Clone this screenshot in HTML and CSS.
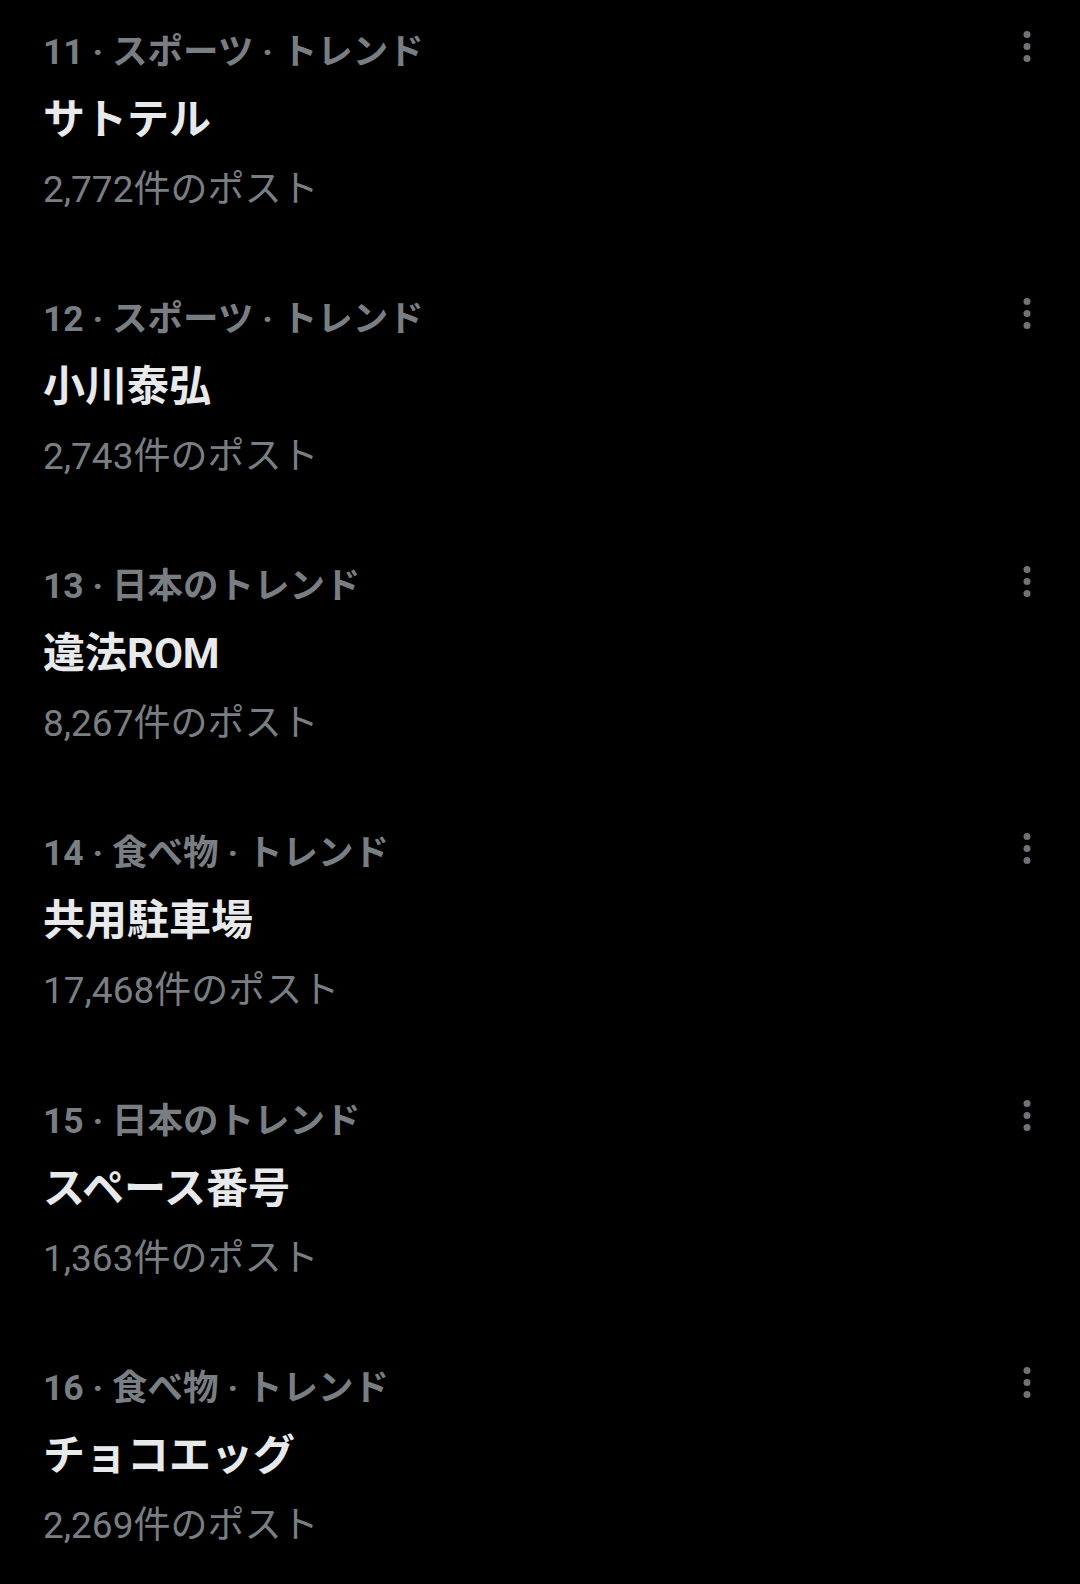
FILE: index.html
```html
<!DOCTYPE html>
<html lang="ja">
<head>
<meta charset="utf-8">
<title>トレンド</title>
<link rel="stylesheet" href="styles.css">
</head>
<body>
<main class="trends">
  <div class="trend">
    <div class="trend-body">
      <div class="meta">11 · スポーツ · トレンド</div>
      <div class="name">サトテル</div>
      <div class="count">2,772件のポスト</div>
    </div>
    <button class="more" aria-label="その他"><svg width="24" height="32" viewBox="0 0 24 32"><circle cx="12" cy="3.5" r="3.5"/><circle cx="12" cy="15.5" r="3.5"/><circle cx="12" cy="27.5" r="3.5"/></svg></button>
  </div>
  <div class="trend">
    <div class="trend-body">
      <div class="meta">12 · スポーツ · トレンド</div>
      <div class="name">小川泰弘</div>
      <div class="count">2,743件のポスト</div>
    </div>
    <button class="more" aria-label="その他"><svg width="24" height="32" viewBox="0 0 24 32"><circle cx="12" cy="3.5" r="3.5"/><circle cx="12" cy="15.5" r="3.5"/><circle cx="12" cy="27.5" r="3.5"/></svg></button>
  </div>
  <div class="trend">
    <div class="trend-body">
      <div class="meta">13 · 日本のトレンド</div>
      <div class="name">違法ROM</div>
      <div class="count">8,267件のポスト</div>
    </div>
    <button class="more" aria-label="その他"><svg width="24" height="32" viewBox="0 0 24 32"><circle cx="12" cy="3.5" r="3.5"/><circle cx="12" cy="15.5" r="3.5"/><circle cx="12" cy="27.5" r="3.5"/></svg></button>
  </div>
  <div class="trend">
    <div class="trend-body">
      <div class="meta">14 · 食べ物 · トレンド</div>
      <div class="name">共用駐車場</div>
      <div class="count">17,468件のポスト</div>
    </div>
    <button class="more" aria-label="その他"><svg width="24" height="32" viewBox="0 0 24 32"><circle cx="12" cy="3.5" r="3.5"/><circle cx="12" cy="15.5" r="3.5"/><circle cx="12" cy="27.5" r="3.5"/></svg></button>
  </div>
  <div class="trend">
    <div class="trend-body">
      <div class="meta">15 · 日本のトレンド</div>
      <div class="name">スペース番号</div>
      <div class="count">1,363件のポスト</div>
    </div>
    <button class="more" aria-label="その他"><svg width="24" height="32" viewBox="0 0 24 32"><circle cx="12" cy="3.5" r="3.5"/><circle cx="12" cy="15.5" r="3.5"/><circle cx="12" cy="27.5" r="3.5"/></svg></button>
  </div>
  <div class="trend">
    <div class="trend-body">
      <div class="meta">16 · 食べ物 · トレンド</div>
      <div class="name">チョコエッグ</div>
      <div class="count">2,269件のポスト</div>
    </div>
    <button class="more" aria-label="その他"><svg width="24" height="32" viewBox="0 0 24 32"><circle cx="12" cy="3.5" r="3.5"/><circle cx="12" cy="15.5" r="3.5"/><circle cx="12" cy="27.5" r="3.5"/></svg></button>
  </div>
</main>
</body>
</html>
```
FILE: styles.css
```css
html, body {
  margin: 0;
  padding: 0;
  background: #000;
}

body {
  font-family: Roboto, "Noto Sans CJK JP", sans-serif;
  width: 1080px;
  height: 1584px;
  overflow: hidden;
}

.trends {
  display: flex;
  flex-direction: column;
}

.trend {
  display: flex;
  align-items: flex-start;
  height: 267.3px;
  box-sizing: border-box;
  padding: 20.5px 41px 0 43px;
}

.trend-body {
  flex: 1;
  display: flex;
  flex-direction: column;
}

.meta {
  font-size: 35.5px;
  font-weight: 700;
  line-height: 62px;
  height: 62px;
  color: #797e83;
  white-space: nowrap;
}

.name {
  font-size: 42px;
  font-weight: 700;
  line-height: 74px;
  height: 74px;
  color: #e7e9ea;
  white-space: nowrap;
}

.count {
  font-size: 37px;
  font-weight: 400;
  line-height: 66px;
  height: 66px;
  color: #797e83;
  white-space: nowrap;
}

.more {
  margin: 10.5px 0 0 0;
  padding: 0;
  border: 0;
  background: transparent;
  width: 24px;
  height: 32px;
  display: flex;
}

.more svg {
  fill: #6f7377;
}
```
